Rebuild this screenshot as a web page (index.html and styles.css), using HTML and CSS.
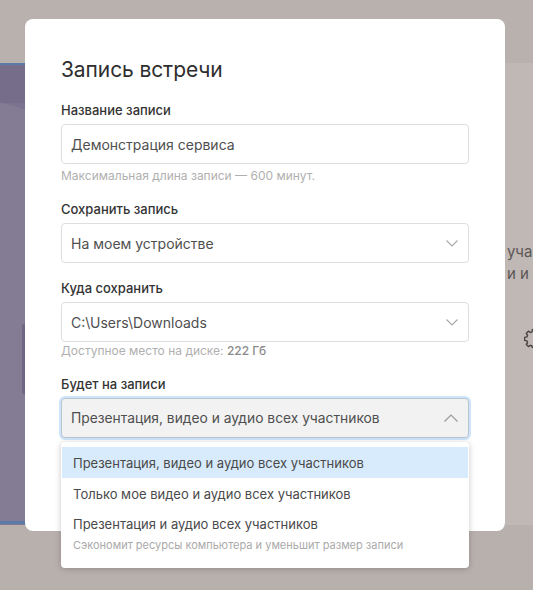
FILE: index.html
```html
<!DOCTYPE html>
<html lang="ru">
<head>
<meta charset="utf-8">
<title>Запись встречи</title>
<link rel="stylesheet" href="styles.css">
</head>
<body>
<div class="app">
  <div class="topbar"></div>
  <div class="main">
    <div class="stage">
      <svg class="stage-art" width="505" height="462" viewBox="0 0 505 462" aria-hidden="true">
        <rect x="0" y="0" width="505" height="462" fill="#7c7390"/>
        <path d="M0 2 L505 2 L505 40 L0 40 Z" fill="#766d8b"/>
        <path d="M0 40 C 20 42, 60 60, 90 90 L 90 462 L 0 462 Z" fill="#847b95"/>
        <path d="M22 262 L60 240 L60 350 L22 330 Z" fill="#6f6786"/>
        <path d="M0 0 H505 V2 H0 Z" fill="#5a7aa8"/>
        <path d="M0 458 H505 V461 H0 Z" fill="#5a7aa8"/>
      </svg>
    </div>
    <div class="side">
      <p class="side-text">уча</p>
      <p class="side-text">и и</p>
      <svg class="gear" width="20" height="20" viewBox="0 0 20 20" aria-hidden="true">
        <path d="M8.5 1.5h3l.5 2.3 1.6.7 2-1.3 2.1 2.1-1.3 2 .7 1.6 2.3.5v3l-2.3.5-.7 1.6 1.3 2-2.1 2.1-2-1.3-1.6.7-.5 2.3h-3l-.5-2.3-1.6-.7-2 1.3-2.1-2.1 1.3-2-.7-1.6-2.3-.5v-3l2.3-.5.7-1.6-1.3-2 2.1-2.1 2 1.3 1.6-.7z" fill="none" stroke="#4a4544" stroke-width="1.4" stroke-linejoin="round"/>
      </svg>
    </div>
  </div>
  <div class="bottombar"></div>
</div>

<div class="modal">
  <h1 class="modal-title">Запись встречи</h1>

  <div class="field">
    <div class="label">Название записи</div>
    <div class="control">Демонстрация сервиса</div>
    <div class="hint">Максимальная длина записи — 600 минут.</div>
  </div>

  <div class="field">
    <div class="label">Сохранить запись</div>
    <div class="control select">
      <span>На моем устройстве</span>
      <svg class="chev" width="12" height="7" viewBox="0 0 12 7"><path d="M0.5 0.5 L6 6 L11.5 0.5" fill="none" stroke="#a8a8a8" stroke-width="1.1"/></svg>
    </div>
  </div>

  <div class="field">
    <div class="label">Куда сохранить</div>
    <div class="control select">
      <span>C:\Users\Downloads</span>
      <svg class="chev" width="12" height="7" viewBox="0 0 12 7"><path d="M0.5 0.5 L6 6 L11.5 0.5" fill="none" stroke="#a8a8a8" stroke-width="1.1"/></svg>
    </div>
    <div class="hint hint-tight">Доступное место на диске: <b class="hint-strong">222 Гб</b></div>
  </div>

  <div class="field">
    <div class="label">Будет на записи</div>
    <div class="control select focused">
      <span>Презентация, видео и аудио всех участников</span>
      <svg class="chev" width="14" height="8" viewBox="0 0 14 8"><path d="M0.5 7.5 L7 1 L13.5 7.5" fill="none" stroke="#9a9a9a" stroke-width="1.2"/></svg>
    </div>
  </div>

  <ul class="menu">
    <li class="menu-item active">Презентация, видео и аудио всех участников</li>
    <li class="menu-item">Только мое видео и аудио всех участников</li>
    <li class="menu-item tall">Презентация и аудио всех участников<span class="menu-sub">Сэкономит ресурсы компьютера и уменьшит размер записи</span></li>
  </ul>
</div>
</body>
</html>
```

FILE: styles.css
```css
* { box-sizing: border-box; }

html, body {
  margin: 0;
  padding: 0;
}

body {
  width: 533px;
  height: 590px;
  overflow: hidden;
  position: relative;
  background: #b8b0ad;
  font-family: Inter, "Noto Sans", sans-serif;
}

.app {
  display: flex;
  flex-direction: column;
  height: 590px;
}

.topbar {
  height: 63px;
  background: #b9b1ae;
}

.main {
  display: flex;
  height: 462px;
}

.stage {
  width: 505px;
  flex: none;
  overflow: hidden;
}

.stage-art { display: block; }

.side {
  flex: 1;
  background: #bfb8b5;
  padding: 178px 0 0 2px;
  overflow: hidden;
  white-space: nowrap;
}

.side-text {
  margin: 0;
  font-size: 15px;
  line-height: 22px;
  color: #5c5654;
}

.gear {
  display: block;
  margin: 43px 0 0 17px;
}

.bottombar {
  flex: 1;
  background: #b8b0ad;
}

.modal {
  position: absolute;
  left: 25px;
  top: 19px;
  width: 480px;
  height: 512px;
  background: #fff;
  border-radius: 8px;
  padding: 37px 36px 0 36px;
}

.modal-title {
  margin: 0 0 17px 0;
  font-size: 21px;
  line-height: 28px;
  font-weight: 400;
  color: #2e2e2e;
  letter-spacing: -0.1px;
}

.field {
  display: flex;
  flex-direction: column;
  margin-bottom: 16px;
}

.label {
  font-size: 13px;
  line-height: 18px;
  font-weight: 500;
  color: #333;
  margin-bottom: 5px;
}

.control {
  height: 40px;
  border: 1px solid #dedede;
  border-radius: 4px;
  padding: 0 10px 0 9px;
  display: flex;
  align-items: center;
  font-size: 14px;
  color: #4f4f4f;
}

.select {
  justify-content: space-between;
}

.chev { flex: none; margin-right: 0; }

.focused {
  background: #f2f2f2;
  border-color: #b9c4cf;
  box-shadow: 0 0 0 2px #cfe5fb;
  font-size: 13.8px;
}

.hint {
  margin-top: 4px;
  font-size: 12px;
  line-height: 16px;
  color: #b0b0b0;
}

.hint-tight { margin-top: 1px; }

.hint-strong {
  font-weight: 500;
  color: #8a8a8a;
}

.menu {
  position: absolute;
  left: 36px;
  top: 423px;
  width: 408px;
  margin: 0;
  padding: 5px 1px 8px 1px;
  list-style: none;
  background: #fff;
  border-radius: 4px;
  box-shadow: 0 1px 6px rgba(0, 0, 0, 0.22);
}

.menu-item {
  height: 31px;
  padding: 0 11px;
  display: flex;
  align-items: center;
  font-size: 13px;
  color: #4a4a4a;
}

.menu-item.active {
  background: #d7ebfc;
}

.menu-item.tall {
  height: 51px;
  flex-direction: column;
  align-items: flex-start;
  justify-content: center;
}

.menu-sub {
  font-size: 11px;
  line-height: 16px;
  margin-top: 5px;
  color: #aaa;
}
```
